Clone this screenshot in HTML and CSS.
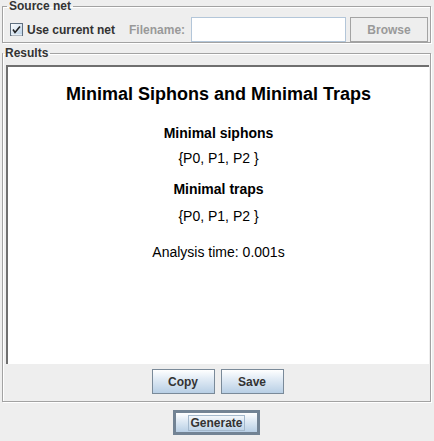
FILE: index.html
```html
<!DOCTYPE html>
<html>
<head>
<meta charset="utf-8">
<link rel="stylesheet" href="styles.css">
</head>
<body>
<div class="window">
  <fieldset class="group source">
    <legend>Source net</legend>
    <div class="source-row">
      <span class="checkbox">
        <svg width="13" height="13" viewBox="0 0 13 13">
          <defs>
            <linearGradient id="cbg" x1="0" y1="0" x2="1" y2="1">
              <stop offset="0" stop-color="#ffffff"/>
              <stop offset="1" stop-color="#b8cfe5"/>
            </linearGradient>
          </defs>
          <rect x="0.5" y="0.5" width="12" height="12" fill="url(#cbg)" stroke="#5f6f80"/>
          <line x1="1.5" y1="12" x2="12" y2="12" stroke="#ffffff"/>
          <path d="M3 6.5 L5 9.5 L10 3.5" fill="none" stroke="#222" stroke-width="1.6"/>
        </svg>
      </span>
      <span class="check-label">Use current net</span>
      <span class="fname-label">Filename:</span>
      <span class="textfield"></span>
      <button class="btn disabled">Browse</button>
    </div>
  </fieldset>

  <fieldset class="group results">
    <legend>Results</legend>
    <div class="pane">
      <div class="doc-title">Minimal Siphons and Minimal Traps</div>
      <div class="doc-head first">Minimal siphons</div>
      <div class="doc-set">{P0, P1, P2 }</div>
      <div class="doc-head second">Minimal traps</div>
      <div class="doc-set">{P0, P1, P2 }</div>
      <div class="doc-time">Analysis time: 0.001s</div>
    </div>
    <div class="actions">
      <button class="btn">Copy</button>
      <button class="btn">Save</button>
    </div>
  </fieldset>

  <div class="footer">
    <button class="btn default"><span class="focus">Generate</span></button>
  </div>
</div>
</body>
</html>
```

FILE: styles.css
```css
html, body {
  margin: 0;
  padding: 0;
  background: #eeeeee;
}

body {
  width: 434px;
  height: 441px;
  overflow: hidden;
  font-family: "Liberation Sans", Arial, sans-serif;
  color: #333333;
}

.window {
  padding-left: 2px;
}

.group {
  box-sizing: border-box;
  width: 429px;
  margin: 0;
  min-inline-size: 0;
  border: 1px solid #a2a2a2;
  box-shadow: 1px 1px 0 #ffffff, inset 1px 1px 0 #ffffff;
}

.group legend {
  font-size: 12px;
  font-weight: bold;
  line-height: 12px;
  color: #333333;
  padding: 0 2px;
  margin-left: -3px;
}

.source {
  padding: 5px 2px 0 7px;
}

.source-row {
  display: flex;
  align-items: center;
  height: 25px;
}

.checkbox {
  display: block;
  width: 13px;
  height: 13px;
}

.checkbox svg {
  display: block;
}

.check-label {
  font-size: 12px;
  font-weight: bold;
  margin-left: 4px;
  color: #333333;
}

.fname-label {
  font-size: 12px;
  font-weight: bold;
  margin-left: 14px;
  color: #999999;
}

.textfield {
  flex: 1;
  box-sizing: border-box;
  height: 25px;
  margin-left: 6px;
  background: #ffffff;
  border: 1px solid #b3c6d9;
}

.btn {
  -webkit-appearance: none;
  appearance: none;
  box-sizing: border-box;
  margin: 0;
  padding: 0;
  font-family: "Liberation Sans", Arial, sans-serif;
  font-size: 12px;
  font-weight: bold;
  color: #333333;
  height: 25px;
  width: 63px;
  border: 1px solid #7a8a99;
  background: linear-gradient(to bottom, #ffffff 0%, #e4edf6 35%, #b8cfe5 100%);
}

.btn.disabled {
  width: 78px;
  margin-left: 4px;
  color: #999999;
  border-color: #a3a3a3;
  background: #eeeeee;
}

.results {
  margin-top: 4px;
  padding: 6px 1px 7px 3px;
}

.pane {
  box-sizing: border-box;
  height: 299px;
  background: #ffffff;
  border-top: 2px solid #6f6f6f;
  border-left: 2px solid #6f6f6f;
  padding-top: 17px;
  text-align: center;
  color: #000000;
}

.doc-title {
  font-size: 18px;
  font-weight: bold;
  line-height: 21px;
}

.doc-head {
  font-size: 14px;
  font-weight: bold;
  line-height: 16px;
}

.doc-head.first {
  margin-top: 20px;
}

.doc-head.second {
  margin-top: 15px;
}

.doc-set {
  font-size: 14px;
  line-height: 16px;
  margin-top: 9px;
}

.doc-head.second + .doc-set {
  margin-top: 11px;
}

.doc-time {
  font-size: 14px;
  line-height: 16px;
  margin-top: 20px;
}

.actions {
  display: flex;
  justify-content: center;
  gap: 6px;
  margin-top: 5px;
}

.footer {
  display: flex;
  justify-content: center;
  margin-top: 8px;
  width: 429px;
}

.btn.default {
  width: 87px;
  height: 25px;
  border: 3px solid #728394;
  display: flex;
  align-items: center;
  justify-content: center;
}

.focus {
  border: 1px solid #a3b8cc;
  padding: 0 1px;
  line-height: 14px;
}
```
